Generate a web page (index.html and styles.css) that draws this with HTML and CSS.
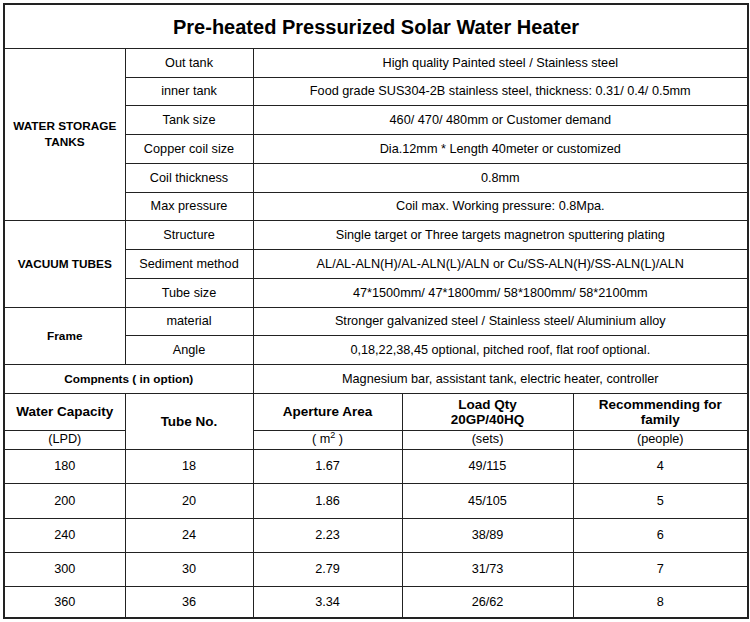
FILE: index.html
```html
<!DOCTYPE html>
<html>
<head>
<meta charset="utf-8">
<link rel="stylesheet" href="styles.css">
</head>
<body>
<table class="spec">
  <colgroup>
    <col class="c1"><col class="c2"><col class="c3"><col class="c4"><col class="c5">
  </colgroup>
  <tr class="h44"><td colspan="5" class="title">Pre-heated Pressurized Solar Water Heater</td></tr>
  <tr class="h29"><td rowspan="6" class="group">WATER STORAGE<br>TANKS</td><td>Out tank</td><td colspan="3">High quality Painted steel / Stainless steel</td></tr>
  <tr class="h28"><td>inner tank</td><td colspan="3">Food grade SUS304-2B stainless steel, thickness: 0.31/ 0.4/ 0.5mm</td></tr>
  <tr class="h29"><td>Tank size</td><td colspan="3">460/ 470/ 480mm or Customer demand</td></tr>
  <tr class="h29"><td>Copper coil size</td><td colspan="3">Dia.12mm * Length 40meter or customized</td></tr>
  <tr class="h29"><td>Coil thickness</td><td colspan="3">0.8mm</td></tr>
  <tr class="h28"><td>Max pressure</td><td colspan="3">Coil max. Working pressure: 0.8Mpa.</td></tr>
  <tr class="h29"><td rowspan="3" class="group">VACUUM TUBES</td><td>Structure</td><td colspan="3">Single target or Three targets magnetron sputtering plating</td></tr>
  <tr class="h29"><td>Sediment method</td><td colspan="3">AL/AL-ALN(H)/AL-ALN(L)/ALN or Cu/SS-ALN(H)/SS-ALN(L)/ALN</td></tr>
  <tr class="h29"><td>Tube size</td><td colspan="3">47*1500mm/ 47*1800mm/ 58*1800mm/ 58*2100mm</td></tr>
  <tr class="h28"><td rowspan="2" class="group">Frame</td><td>material</td><td colspan="3">Stronger galvanized steel / Stainless steel/ Aluminium alloy</td></tr>
  <tr class="h29"><td>Angle</td><td colspan="3">0,18,22,38,45 optional, pitched roof, flat roof optional.</td></tr>
  <tr class="h29"><td colspan="2" class="group">Compnents ( in option)</td><td colspan="3">Magnesium bar, assistant tank, electric heater, controller</td></tr>
  <tr class="h37 head"><td>Water Capacity</td><td rowspan="2" class="tube">Tube No.</td><td>Aperture Area</td><td>Load Qty<br>20GP/40HQ</td><td>Recommending for<br>family</td></tr>
  <tr class="h19 unit"><td>(LPD)</td><td>( m<sup>2</sup> )</td><td>(sets)</td><td>(people)</td></tr>
  <tr class="h34"><td>180</td><td>18</td><td>1.67</td><td>49/115</td><td>4</td></tr>
  <tr class="h35"><td>200</td><td>20</td><td>1.86</td><td>45/105</td><td>5</td></tr>
  <tr class="h34"><td>240</td><td>24</td><td>2.23</td><td>38/89</td><td>6</td></tr>
  <tr class="h34"><td>300</td><td>30</td><td>2.79</td><td>31/73</td><td>7</td></tr>
  <tr class="h32"><td>360</td><td>36</td><td>3.34</td><td>26/62</td><td>8</td></tr>
</table>
</body>
</html>
```

FILE: styles.css
```css
html, body {
  margin: 0;
  padding: 0;
  background: #fff;
}
body {
  padding: 3px 0 0 3px;
  font-family: "Liberation Sans", Arial, sans-serif;
  color: #000;
}
.spec {
  border-collapse: collapse;
  table-layout: fixed;
  width: 744px;
  border: 2px solid #222;
}
.c1 { width: 121px; }
.c2 { width: 128px; }
.c3 { width: 149px; }
.c4 { width: 171px; }
.c5 { width: 175px; }
.spec td {
  border: 1px solid #222;
  padding: 0 2px;
  text-align: center;
  vertical-align: middle;
  font-size: 12.7px;
  line-height: 14px;
  white-space: nowrap;
}
.spec td.title {
  font-size: 20px;
  font-weight: bold;
  line-height: 24px;
  padding-top: 2px;
}
.spec td.group {
  font-size: 11.8px;
  font-weight: bold;
  line-height: 16px;
}
.head td {
  font-weight: bold;
  font-size: 13.5px;
  line-height: 15px;
}
.unit td {
  line-height: 13px;
}
.unit sup {
  font-size: 9px;
  line-height: 0;
  vertical-align: 5px;
}
.h44 { height: 44px; }
.h37 { height: 37px; }
.h35 { height: 35px; }
.h34 { height: 34px; }
.h32 { height: 32px; }
.h29 { height: 29px; }
.h28 { height: 28px; }
.h19 { height: 19px; }
```
